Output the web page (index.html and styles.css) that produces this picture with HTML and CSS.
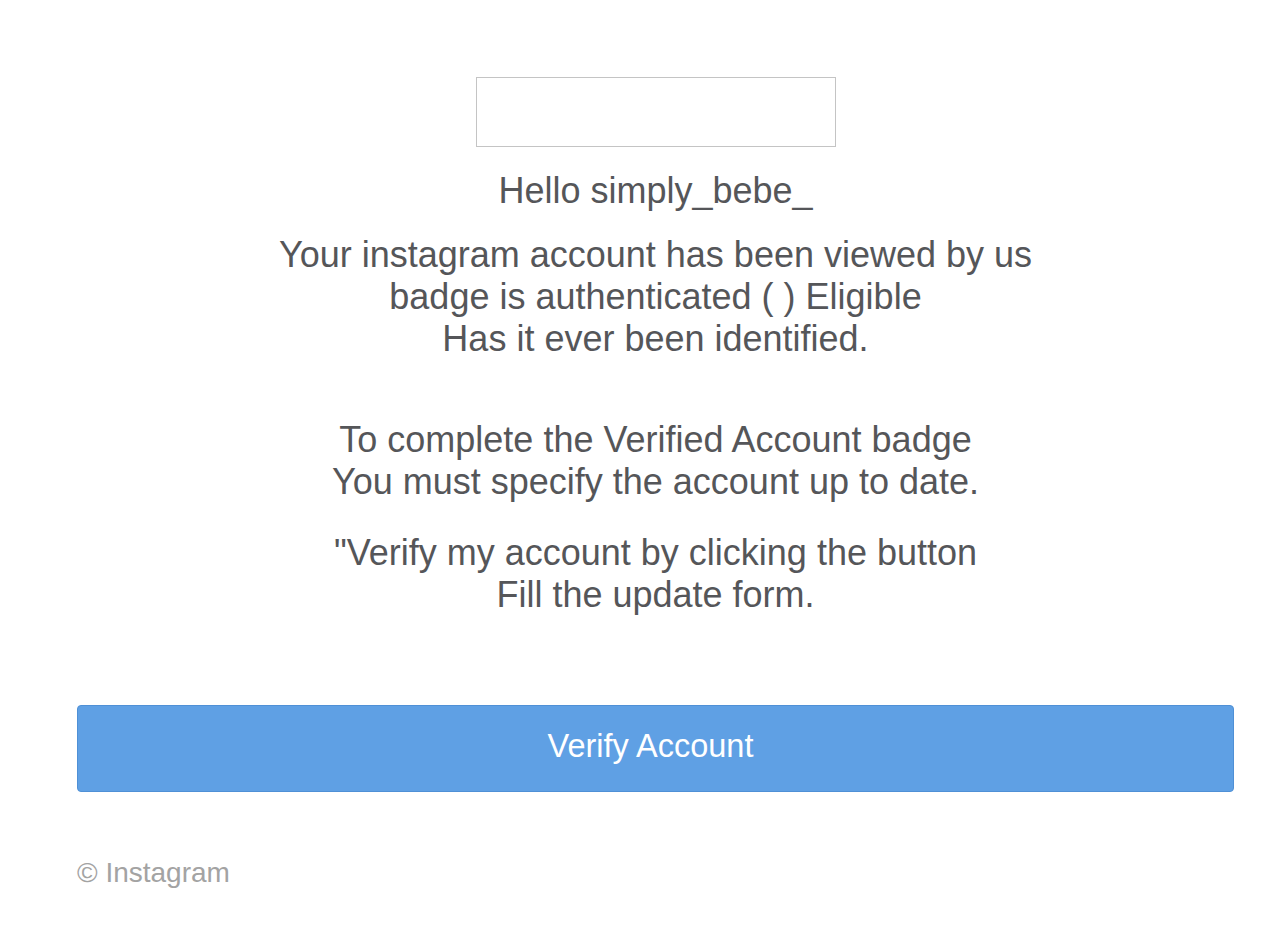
FILE: index.html
```html
<!DOCTYPE html>
<html>
<head>
<meta charset="utf-8">
<link rel="stylesheet" href="styles.css">
</head>
<body>
<div class="page">
  <div class="logo-box"></div>
  <p class="hello">Hello simply_bebe_</p>
  <p class="msg">Your instagram account has been viewed by us<br>badge is authenticated ( ) Eligible<br>Has it ever been identified.</p>
  <p class="msg second">To complete the Verified Account badge<br>You must specify the account up to date.</p>
  <p class="msg third">"Verify my account by clicking the button<br>Fill the update form.</p>
  <div class="btn">Verify Account</div>
  <p class="footer">© Instagram</p>
</div>
</body>
</html>
```
FILE: styles.css
```css
html, body { margin: 0; padding: 0; background: #fff; }
body { font-family: "Liberation Sans", Arial, sans-serif; color: #555659; }
.page { padding: 77px 50px 0 77px; display: flex; flex-direction: column; align-items: center; }
.logo-box { width: 358px; height: 68px; border: 1px solid #c4c4c4; }
p { margin: 0; text-align: center; }
.hello { font-size: 36px; line-height: 42px; margin-top: 23px; }
.msg { font-size: 36px; line-height: 42px; margin-top: 22px; }
.second { margin-top: 59px; }
.third { margin-top: 29px; }
.btn { align-self: stretch; margin-top: 89px; height: 87px; box-sizing: border-box; padding: 0 10px 4px 0; background: #5fa0e4; border: 1px solid #4f90d6; border-radius: 4px; color: #fff; font-size: 32.5px; display: flex; align-items: center; justify-content: center; }
.footer { align-self: flex-start; margin-top: 63px; color: #a3a3a3; font-size: 28px; line-height: 36px; }
```
